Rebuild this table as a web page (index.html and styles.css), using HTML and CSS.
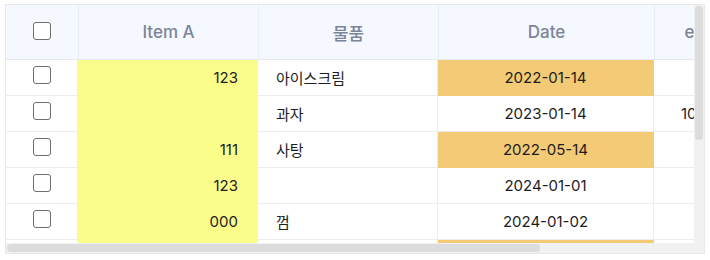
FILE: index.html
```html
<!DOCTYPE html>
<html lang="ko">
<head>
<meta charset="utf-8">
<title>Grid</title>
<link rel="stylesheet" href="styles.css">
</head>
<body>
<div class="frame">
  <div class="viewport">
    <table class="grid">
      <colgroup>
        <col class="c-chk"><col class="c-a"><col class="c-name"><col class="c-date"><col class="c-ea"><col class="c-price"><col class="c-note">
      </colgroup>
      <thead>
        <tr>
          <th class="chk first"><input type="checkbox" class="box"></th>
          <th>Item A</th>
          <th>물품</th>
          <th>Date</th>
          <th>ea</th>
          <th>가격</th>
          <th>비고</th>
        </tr>
      </thead>
      <tbody>
        <tr><td class="chk"><input type="checkbox" class="box"></td><td class="num yellow">123</td><td class="txt">아이스크림</td><td class="date orange">2022-01-14</td><td class="ctr"></td><td class="ctr">1,000</td><td class="ctr"></td></tr>
        <tr><td class="chk"><input type="checkbox" class="box"></td><td class="num yellow"></td><td class="txt">과자</td><td class="date">2023-01-14</td><td class="ctr">100</td><td class="ctr">1,500</td><td class="ctr"></td></tr>
        <tr><td class="chk"><input type="checkbox" class="box"></td><td class="num yellow">111</td><td class="txt">사탕</td><td class="date orange">2022-05-14</td><td class="ctr"></td><td class="ctr">500</td><td class="ctr"></td></tr>
        <tr><td class="chk"><input type="checkbox" class="box"></td><td class="num yellow">123</td><td class="txt"></td><td class="date">2024-01-01</td><td class="ctr"></td><td class="ctr"></td><td class="ctr"></td></tr>
        <tr><td class="chk"><input type="checkbox" class="box"></td><td class="num yellow">000</td><td class="txt">껌</td><td class="date">2024-01-02</td><td class="ctr"></td><td class="ctr">300</td><td class="ctr"></td></tr>
        <tr><td class="chk"><input type="checkbox" class="box"></td><td class="num yellow">222</td><td class="txt">초콜릿</td><td class="date orange">2022-03-10</td><td class="ctr"></td><td class="ctr">2,000</td><td class="ctr"></td></tr>
        <tr><td class="chk"><input type="checkbox" class="box"></td><td class="num yellow">321</td><td class="txt">젤리</td><td class="date">2024-02-01</td><td class="ctr">20</td><td class="ctr">800</td><td class="ctr"></td></tr>
        <tr><td class="chk"><input type="checkbox" class="box"></td><td class="num yellow">456</td><td class="txt">쿠키</td><td class="date">2024-02-14</td><td class="ctr"></td><td class="ctr">1,200</td><td class="ctr"></td></tr>
      </tbody>
    </table>
  </div>
  <div class="vbar"><div class="vthumb"></div></div>
  <div class="hbar"><div class="hthumb"></div></div>
  <div class="corner"></div>
</div>
</body>
</html>
```

FILE: styles.css
```css
html, body {
  margin: 0;
  padding: 0;
  background: #ffffff;
}

body {
  padding: 4px 5px;
  font-family: Inter, "Noto Sans CJK KR", sans-serif;
}

.frame {
  width: 700px;
  height: 250px;
  box-sizing: border-box;
  border: 1px solid #e8e8e8;
  display: grid;
  grid-template-columns: 688px 10px;
  grid-template-rows: 238px 10px;
  overflow: hidden;
}

.viewport {
  overflow: hidden;
}

.vbar {
  background: #f1f1f1;
  padding: 1px;
}

.vthumb {
  width: 8px;
  height: 134px;
  background: #dcdcdc;
  border-radius: 4px;
}

.hbar {
  background: #f1f1f1;
  padding: 1px;
}

.hthumb {
  width: 533px;
  height: 8px;
  background: #dcdcdc;
  border-radius: 4px;
}

.corner {
  background: #f1f1f1;
}

.grid {
  border-collapse: separate;
  border-spacing: 0;
  table-layout: fixed;
  width: 888px;
}

.c-chk { width: 72px; }
.c-a { width: 180px; }
.c-name { width: 180px; }
.c-date { width: 216px; }
.c-ea { width: 80px; }
.c-price { width: 80px; }
.c-note { width: 80px; }

.grid th {
  height: 55px;
  box-sizing: border-box;
  padding: 0;
  background: #f5f8ff;
  color: #7b8598;
  font-size: 17px;
  font-weight: 500;
  text-align: center;
  vertical-align: middle;
  border-bottom: 1px solid #e4e8ef;
  border-left: 1px solid #e9edf4;
  white-space: nowrap;
  overflow: hidden;
}

.grid th.first {
  border-left: none;
}

.grid th.chk {
  padding-bottom: 4px;
}

.grid td {
  height: 36px;
  box-sizing: border-box;
  padding: 0;
  font-size: 15px;
  color: #1d1d1f;
  vertical-align: middle;
  border-bottom: 1px solid #ececec;
  border-right: 1px solid #ececec;
  white-space: nowrap;
  overflow: hidden;
}

.grid td.chk {
  text-align: center;
  padding-bottom: 6px;
}

.grid td.num {
  text-align: right;
  padding-right: 19px;
}

.grid td.txt {
  text-align: left;
  padding-left: 18px;
}

.grid td.date,
.grid td.ctr {
  text-align: center;
}

.grid td.yellow {
  background: #fbfd8b;
  border-color: transparent;
}

.grid td.orange {
  background: #f3ca75;
  border-color: transparent;
}

.box {
  appearance: none;
  -webkit-appearance: none;
  display: inline-block;
  vertical-align: middle;
  width: 18px;
  height: 18px;
  margin: 0;
  box-sizing: border-box;
  border: 1.5px solid #6f6f6f;
  border-radius: 3px;
  background: #ffffff;
}
```
